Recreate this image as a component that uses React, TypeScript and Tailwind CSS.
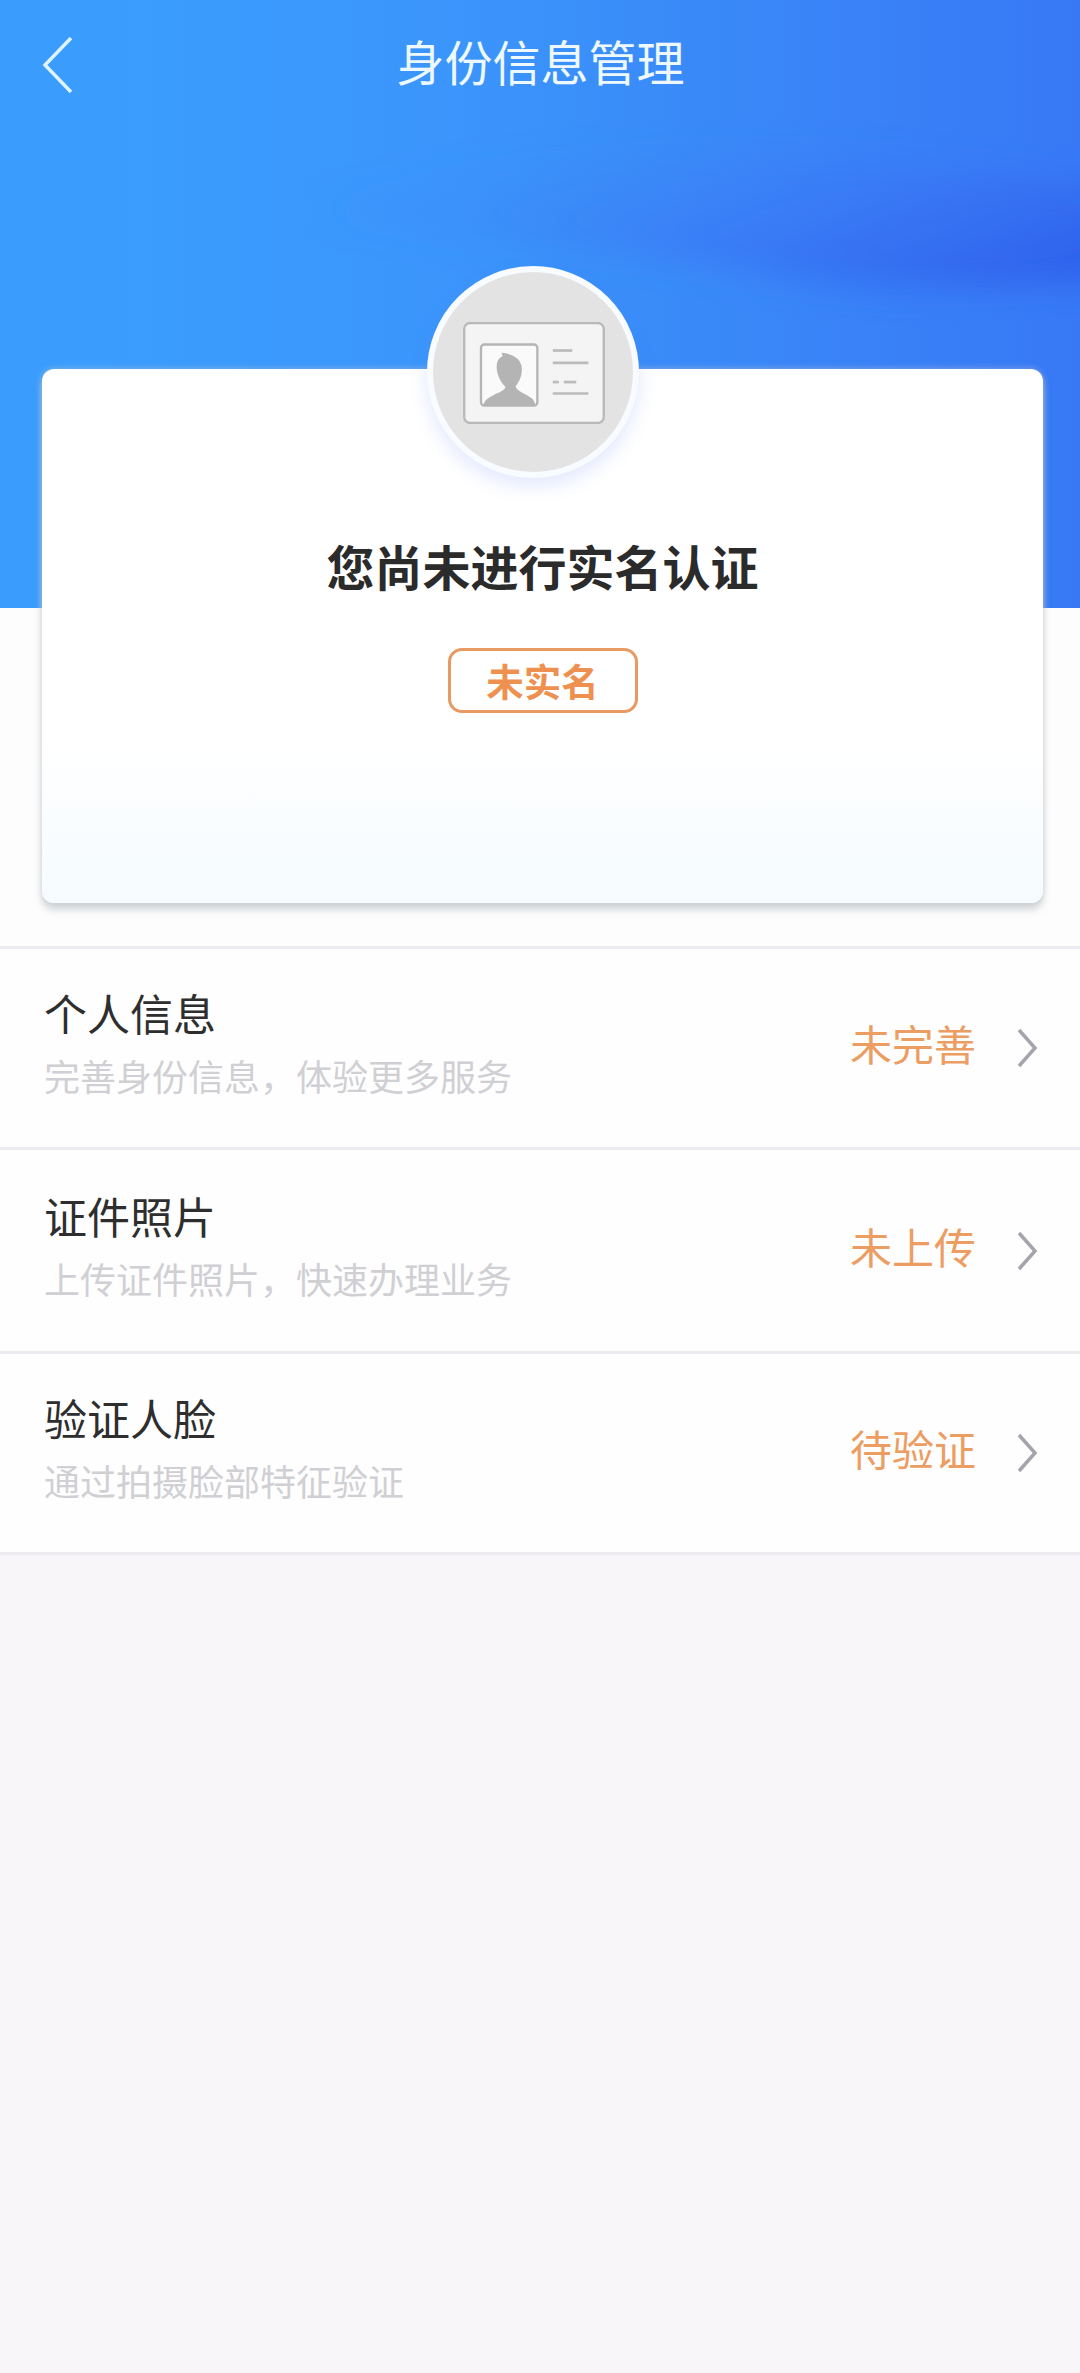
const rows = [
  { title: '个人信息', desc: '完善身份信息，体验更多服务', status: '未完善', height: 'h-[201px]' },
  { title: '证件照片', desc: '上传证件照片，快速办理业务', status: '未上传', height: 'h-[204px]' },
  { title: '验证人脸', desc: '通过拍摄脸部特征验证', status: '待验证', height: 'h-[201px]' },
];

function HeroWaves() {
  return (
    <svg className="absolute inset-0 h-full w-full" viewBox="0 0 1080 608" preserveAspectRatio="none">
      <defs>
        <linearGradient id="waveA" x1="0" y1="0.3" x2="1" y2="0.75">
          <stop offset="0" stopColor="#3f8ff9" stopOpacity="0" />
          <stop offset="0.5" stopColor="#3a78f5" stopOpacity="0.6" />
          <stop offset="1" stopColor="#2c60ec" stopOpacity="1" />
        </linearGradient>
        <filter id="soft" x="-20%" y="-30%" width="140%" height="160%">
          <feGaussianBlur stdDeviation="16" />
        </filter>
      </defs>
      <path
        d="M300 210 C520 140 800 140 1130 190 L1130 278 C1000 285 880 295 780 275 C620 245 440 240 300 210 Z"
        fill="url(#waveA)"
        filter="url(#soft)"
      />
    </svg>
  );
}

function IdCardIcon() {
  return (
    <svg width="142" height="102" viewBox="190 218 422 304">
      <rect x="193" y="221" width="416" height="298" rx="18" fill="#f4f4f4" stroke="#b9b9b9" strokeWidth="7" />
      <rect x="243" y="285" width="168" height="182" rx="10" fill="#fafafa" stroke="#b5b5b5" strokeWidth="7" />
      <path
        d="M304 310 C326 312 358 320 364 350 C368 376 356 398 346 410 C350 424 374 430 392 444 C400 450 404 458 405 466 L250 466 C252 454 262 444 280 436 C296 428 312 424 316 412 C300 396 288 372 290 346 C292 330 300 322 308 320 Z"
        fill="#b4b4b4"
      />
      <g stroke="#bbbbbb" strokeWidth="8">
        <path d="M457 303 H515" />
        <path d="M457 340 H563" />
        <path d="M457 397 H475" />
        <path d="M490 397 H527" />
        <path d="M457 431 H563" />
      </g>
    </svg>
  );
}

function ArrowRight() {
  return (
    <svg width="22" height="40" viewBox="0 0 22 40" fill="none">
      <path d="M3 2 L19 20 L3 38" stroke="#a4a4ac" strokeWidth="3.5" />
    </svg>
  );
}

export default function App() {
  return (
    <div className="min-h-[2373px] w-[1080px] bg-[#f8f6f9] font-['Noto_Sans_CJK_SC','Noto_Sans',sans-serif]">
      {/* Header */}
      <div className="relative h-[608px] overflow-hidden bg-gradient-to-r from-[#3a9dfd] from-[10%] via-[#3b95fb] via-[42%] to-[#3878f5]">
        <HeroWaves />
        <div className="relative flex h-[122px] items-center justify-center">
          <svg className="absolute left-[42px] top-[37px]" width="32" height="56" viewBox="0 0 32 56" fill="none">
            <path d="M29 1 L3 28 L29 55" stroke="#dff3ff" strokeWidth="3.5" />
          </svg>
          <h1 className="-mt-[3px] pl-[1px] text-[48px] leading-none font-normal text-[#eef9ff]">身份信息管理</h1>
        </div>
      </div>

      <div className="bg-[#fdfdfd] pb-[43px]">
        {/* Status card */}
        <div className="relative ml-[42px] mr-[37px] -mt-[239px] h-[534px] rounded-[12px] bg-gradient-to-b from-white from-[70%] to-[#f5fbff] text-center shadow-[0_7px_7px_rgba(190,195,200,0.65),0_0_6px_rgba(200,200,205,0.6)]">
          <div className="absolute left-[385px] -top-[103px] flex h-[212px] w-[212px] items-center justify-center rounded-full border-[6px] border-[#f8fbff] bg-[#e3e3e3] pl-[2px] pt-[2px] shadow-[0_8px_18px_rgba(100,130,250,0.18)]">
            <IdCardIcon />
          </div>
          <div className="pt-[167px]">
            <h2 className="text-[48px] leading-[58px] font-bold text-[#2b2b2b]">您尚未进行实名认证</h2>
            <div className="mt-[54px] flex justify-center">
              <span className="flex h-[65px] w-[190px] items-center justify-center rounded-[14px] border-[3px] border-[#e89a62] text-[37.5px] font-bold text-[#ee9150]">
                未实名
              </span>
            </div>
          </div>
        </div>
      </div>

      {/* Rows */}
      <div className="border-t-[3px] border-[#ececf0] bg-[#fefefe]">
        {rows.map((row) => (
          <div
            key={row.title}
            className={`flex items-center justify-between border-b-[3px] border-[#ececf0] pl-[44px] pr-[42px] ${row.height}`}
          >
            <div className="pb-[13px]">
              <div className="text-[43px] leading-[54px] text-[#2e2e2e]">{row.title}</div>
              <div className="mt-[13px] text-[36px] leading-[46px] text-[#d0d0d4]">{row.desc}</div>
            </div>
            <div className="flex items-center gap-[40px]">
              <span className="-mt-[10px] text-[42px] leading-none text-[#ec9d62]">{row.status}</span>
              <ArrowRight />
            </div>
          </div>
        ))}
      </div>
    </div>
  );
}
